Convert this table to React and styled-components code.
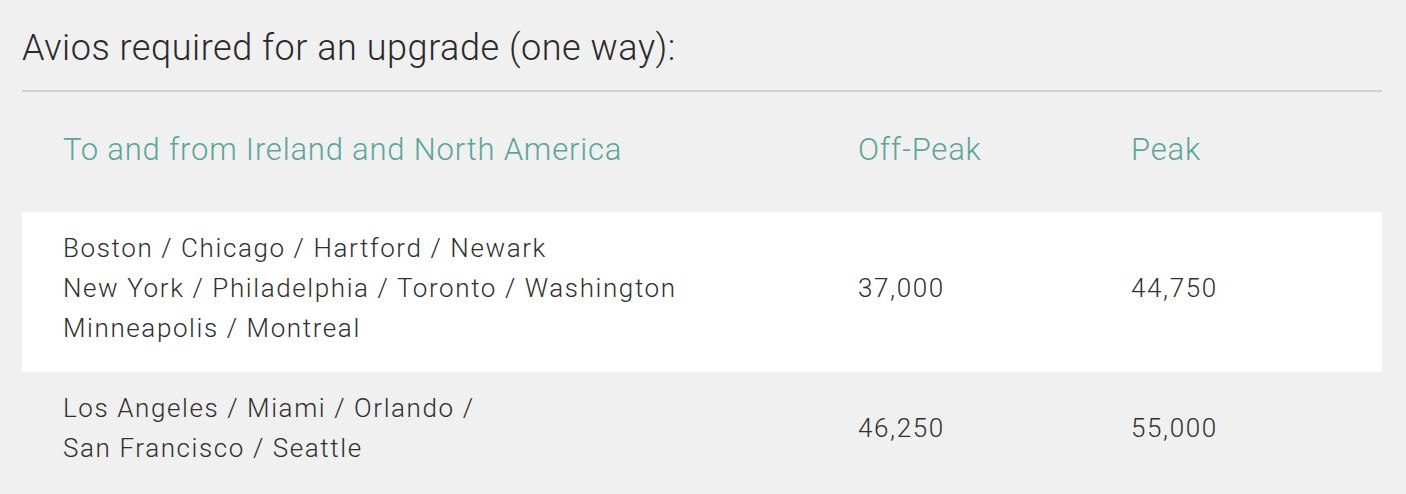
import React from "react";
import styled, { createGlobalStyle } from "styled-components";

const Global = createGlobalStyle`
  html, body { margin: 0; padding: 0; background: #f0f0f0; }
  body { font-family: Roboto, "Open Sans", sans-serif; font-weight: 300; color: #2f2f2f; }
`;

const Page = styled.div`
  padding: 24px 24px 0 22px;
`;

const Title = styled.h2`
  margin: 0;
  font-size: 36px;
  font-weight: 300;
  letter-spacing: 0.55px;
  line-height: 48px;
  color: #2a2a2a;
  padding-bottom: 18px;
  border-bottom: 2px solid #cfcfcf;
`;

const Table = styled.div`
  display: flex;
  flex-direction: column;
`;

const Row = styled.div`
  display: grid;
  grid-template-columns: 795px 273px 1fr;
  align-items: center;
  box-sizing: border-box;
  padding: ${(p) => (p.$header ? "0 41px 4px" : "16px 41px 24px")};
  height: ${(p) => (p.$header ? "120px" : "auto")};
  background: ${(p) => (p.$white ? "#ffffff" : "transparent")};
  color: ${(p) => (p.$header ? "#5ba69a" : "#2f2f2f")};
  font-size: ${(p) => (p.$header ? "31px" : "26px")};
  letter-spacing: ${(p) => (p.$header ? "0.8px" : "1.6px")};
  line-height: 40px;
`;

const Cell = styled.div``;

const rows = [
  {
    cities: ["Boston / Chicago / Hartford / Newark", "New York / Philadelphia / Toronto / Washington", "Minneapolis / Montreal"],
    off: "37,000",
    peak: "44,750",
  },
  {
    cities: ["Los Angeles / Miami / Orlando /", "San Francisco / Seattle"],
    off: "46,250",
    peak: "55,000",
  },
];

export default function App() {
  return (
    <Page>
      <Global />
      <Title>Avios required for an upgrade (one way):</Title>
      <Table>
        <Row $header>
          <Cell>To and from Ireland and North America</Cell>
          <Cell>Off-Peak</Cell>
          <Cell>Peak</Cell>
        </Row>
        {rows.map((r, i) => (
          <Row key={i} $white={i % 2 === 0}>
            <Cell>
              {r.cities.map((c, j) => (
                <div key={j}>{c}</div>
              ))}
            </Cell>
            <Cell>{r.off}</Cell>
            <Cell>{r.peak}</Cell>
          </Row>
        ))}
      </Table>
    </Page>
  );
}
